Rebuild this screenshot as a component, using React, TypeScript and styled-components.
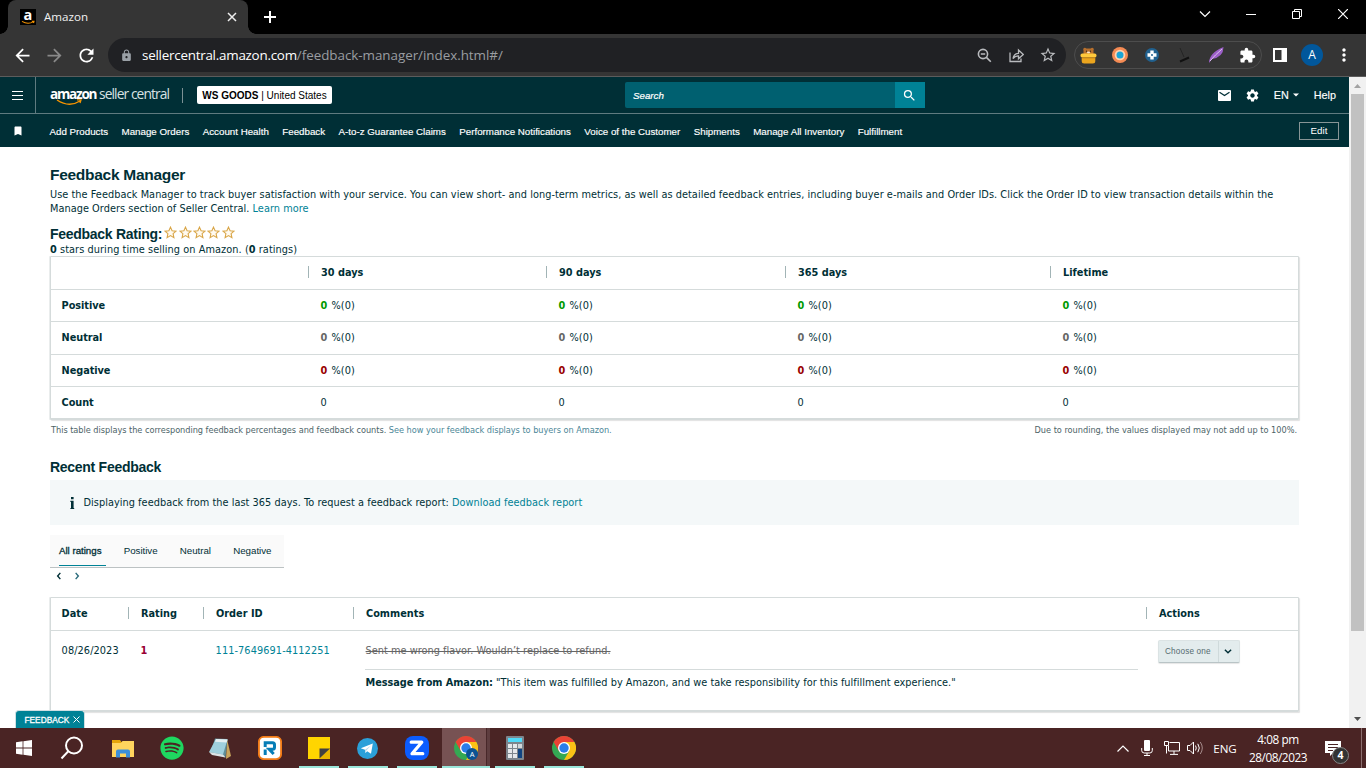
import React from "react";
import styled, { createGlobalStyle, css } from "styled-components";
import {
  MdArrowBack,
  MdArrowForward,
  MdRefresh,
  MdLock,
  MdStarOutline,
  MdExtension,
  MdMoreVert,
  MdSettings,
  MdBookmark,
  MdSearch,
} from "react-icons/md";
import { FaSpotify } from "react-icons/fa";

const ui = `"Open Sans", "Noto Sans", sans-serif`;
const arial = `"Liberation Sans", Arial, sans-serif`;
const verdana = `"DejaVu Sans", Verdana, sans-serif`;
const ink = "#002f36";
const teal = "#008296";
const line = "#d5dbdb";

const Global = createGlobalStyle`
  * { box-sizing: border-box; }
  body { margin: 0; background: #fff; overflow: hidden; }
  svg { display: block; flex: none; }
`;

const Desktop = styled.div`
  width: 1366px;
  height: 768px;
  display: flex;
  flex-direction: column;
  white-space: nowrap;
  overflow: hidden;
`;

/* ---------- browser chrome ---------- */

const TabStrip = styled.div`
  height: 34px;
  flex: none;
  background: #000;
  display: flex;
  align-items: center;
  padding-left: 8px;
  color: #fff;
`;

const BrowserTab = styled.div`
  position: relative;
  width: 240px;
  height: 34px;
  background: #353535;
  border-radius: 8px 8px 0 0;
  display: flex;
  align-items: center;
  padding: 0 10px 1px 12px;
  font: 11.6px ${ui};
  color: #f1f1f1;
  &::before,
  &::after {
    content: "";
    position: absolute;
    bottom: 0;
    width: 8px;
    height: 8px;
  }
  &::before {
    left: -8px;
    background: radial-gradient(circle at 0 0, transparent 7.5px, #353535 8px);
  }
  &::after {
    right: -8px;
    background: radial-gradient(circle at 100% 0, transparent 7.5px, #353535 8px);
  }
`;

const TabName = styled.span`
  flex: 1;
  margin-left: 8px;
`;

const NewTab = styled.div`
  margin-left: 15px;
  flex: 1;
`;

const WindowButtons = styled.div`
  display: flex;
  height: 28px;
  align-items: center;
  align-self: flex-start;
`;

const WindowButton = styled.div`
  width: 46px;
  display: flex;
  justify-content: center;
`;

const Toolbar = styled.div`
  height: 43px;
  flex: none;
  background: #353535;
  border-bottom: 1px solid #5c5c5c;
  display: flex;
  align-items: center;
  padding-left: 6px;
`;

const ToolButton = styled.div<{ $w?: number; $color?: string }>`
  flex: none;
  width: ${(p) => p.$w ?? 32}px;
  display: flex;
  justify-content: center;
  color: ${(p) => p.$color ?? "#fff"};
`;

const Omnibox = styled.div`
  width: 958px;
  height: 34px;
  margin-left: 6px;
  border-radius: 17px;
  background: #202124;
  display: flex;
  align-items: center;
  padding: 0 2px 0 12px;
  color: #9aa0a6;
`;

const Url = styled.div`
  flex: 1;
  margin-left: 9px;
  font: 13.4px ${ui};
  letter-spacing: -0.24px;
  color: #fff;
`;

const UrlPath = styled.span`
  color: #9a9da1;
  letter-spacing: -0.03px;
`;

const Extensions = styled.div`
  width: 188px;
  height: 28px;
  margin: 0 2px 0 8px;
  border: 1px solid #4d4d4d;
  border-radius: 14px;
  display: flex;
  align-items: center;
`;

const Avatar = styled.div`
  width: 22px;
  height: 22px;
  border-radius: 50%;
  background: #01579b;
  color: #fff;
  font: 12px/22px ${ui};
  text-align: center;
`;

/* ---------- page ---------- */

const Viewport = styled.div`
  position: relative;
  height: 651px;
  flex: none;
  display: flex;
`;

const Page = styled.div`
  width: 1349px;
  height: 651px;
  overflow: hidden;
`;

const Scrollbar = styled.div`
  width: 17px;
  background: #f1f1f1;
  display: flex;
  flex-direction: column;
  align-items: center;
  justify-content: space-between;
  padding: 7px 0 7px;
`;

const Thumb = styled.div`
  width: 13px;
  height: 537px;
  margin: 6px 0 auto;
  background: #c1c1c1;
`;

const HeaderBar = styled.header`
  height: 37px;
  background: ${ink};
  border-bottom: 1px solid #5f7b80;
  display: flex;
  align-items: center;
  color: #fff;
`;

const MenuButton = styled.div`
  width: 36px;
  height: 36px;
  border-right: 1px solid #5f7b80;
  display: flex;
  align-items: center;
  justify-content: center;
`;

const Brand = styled.div`
  position: relative;
  width: 133px;
  height: 18px;
  margin: 0 14px 0 14px;
  display: flex;
  align-items: center;
`;

const BrandName = styled.span`
  font: 700 13.6px/16px ${ui};
  letter-spacing: -1.25px;
  width: 49px;
  margin-top: -3px;
`;

const BrandSub = styled.span`
  font: 400 13.8px/16px ${ui};
  letter-spacing: -0.91px;
  color: #d9e2e3;
  flex: 1;
  margin-top: -3px;
`;

const BrandRule = styled.span`
  width: 1px;
  height: 15px;
  background: #7c9195;
`;

const Smile = styled.svg`
  position: absolute;
  left: 6px;
  top: 13px;
`;

const StorePill = styled.div`
  width: 135px;
  height: 18px;
  border-radius: 2px;
  background: #fff;
  color: #000;
  font: 10px/19px ${arial};
  text-align: center;
`;

const SearchBox = styled.div`
  margin-left: 293px;
  width: 270px;
  height: 26px;
  border-radius: 2px 0 0 2px;
  background: #006070;
  padding-left: 8px;
  font: italic 9.75px/27px ${arial};
  -webkit-text-stroke: 0.2px #fff;
`;

const SearchButton = styled.div`
  width: 30px;
  height: 26px;
  padding-right: 1px;
  background: #008296;
  display: flex;
  align-items: center;
  justify-content: center;
`;

const HeaderTools = styled.div`
  margin-left: auto;
  padding-right: 13px;
  display: flex;
  align-items: center;
  font: 10.8px ${arial};
  -webkit-text-stroke: 0.15px #fff;
`;

const Lang = styled.div`
  display: flex;
  align-items: center;
  gap: 4px;
  margin-right: 15px;
`;

const NavBar = styled.nav`
  height: 33px;
  background: ${ink};
  color: #fff;
  display: flex;
  align-items: center;
  gap: 13.45px;
  padding: 0 10px 0 12px;
  font: 9.75px ${arial};
`;

const BookmarkSlot = styled.div`
  width: 24.1px;
`;

const NavLink = styled.span`
  -webkit-text-stroke: 0.15px #fff;
  padding-top: 2px;
`;

const EditButton = styled.div`
  margin-left: auto;
  width: 40px;
  height: 18px;
  border: 1px solid #879596;
  text-align: center;
  line-height: 16px;
`;

const Main = styled.main`
  padding: 18px 50px 0 50px;
  color: ${ink};
  font: 9.75px/14px ${verdana};
  letter-spacing: 0.03px;
`;

const PageTitle = styled.h1`
  margin: 0;
  font: 700 15.5px/20px ${arial};
  letter-spacing: -0.28px;
`;

const Heading = styled.h2`
  margin: 0;
  font: 700 14px/20px ${arial};
  letter-spacing: -0.28px;
`;

const Intro = styled.p`
  margin: 3px 0 8px;
  letter-spacing: 0.042px;
`;

const Link = styled.a`
  color: ${teal};
`;

const RatingLine = styled.div`
  display: flex;
  align-items: center;
  height: 19px;
  padding-top: 1px;
`;

const Stars = styled.div`
  display: flex;
  gap: 1.4px;
  margin: -4px 0 0 2px;
`;

const RatingSummary = styled.div`
  height: 13px;
  line-height: 14px;
  letter-spacing: 0.07px;
`;

const Card = styled.section`
  border: 1px solid ${line};
  border-bottom-width: 2px;
  border-radius: 1px;
  box-shadow: 1px 1px 1px rgba(0, 0, 0, 0.12), -1px 0 0 rgba(213, 219, 219, 0.5);
`;

const summaryCols = css`
  grid-template-columns: 257px 238px 239px 265px 1fr;
`;
const feedbackCols = css`
  grid-template-columns: 77px 75px 150px 793px 1fr;
`;

const TableRow = styled.div<{ $h: number; $feedback?: boolean; $top?: boolean }>`
  display: grid;
  ${(p) => (p.$feedback ? feedbackCols : summaryCols)}
  height: ${(p) => p.$h}px;
  align-items: ${(p) => (p.$top ? "start" : "center")};
  & + & {
    border-top: 1px solid ${line};
  }
`;

const HeadCell = styled.div`
  font-weight: 700;
  letter-spacing: 0;
  padding-left: 10.6px;
  height: 12px;
  line-height: 13px;
  margin-top: -2px;
  & + & {
    padding-left: 12px;
    border-left: 1px solid #a2b4b6;
  }
`;

const Cell = styled.div`
  padding-left: 12.6px;
  letter-spacing: 0.07px;
`;

const RowName = styled.div`
  padding-left: 10.6px;
  font-weight: 700;
  letter-spacing: -0.06px;
`;

const Percent = styled.b<{ $tone: string }>`
  color: ${(p) => p.$tone};
  margin-right: 4px;
`;

const Note = styled.div`
  display: flex;
  justify-content: space-between;
  padding: 4px 2px 0 1px;
  height: 16px;
  font-size: 8.2px;
  line-height: 13px;
  letter-spacing: -0.03px;
  color: #4d6468;
  margin-bottom: 21px;
`;

const NoteLink = styled.a`
  color: #4c8798;
`;

const NoteRight = styled.span`
  letter-spacing: -0.01px;
`;

const Alert = styled.div`
  height: 45px;
  margin: 3px 0 10px;
  background: #f4f8f9;
  display: flex;
  align-items: center;
  padding-left: 20px;
`;

const AlertText = styled.span`
  margin-left: 8.5px;
  letter-spacing: 0.045px;
`;

const FilterTabs = styled.div`
  width: 234px;
  height: 33px;
  background: #fafafa;
  border-bottom: 1px solid #bcc2c3;
  display: flex;
  gap: 22.2px;
  padding-left: 9px;
  font: 9.75px/31px ${arial};
  letter-spacing: -0.03px;
`;

const FilterTab = styled.div<{ $active?: boolean }>`
  ${(p) =>
    p.$active &&
    css`
      width: 47px;
      height: 31px;
      margin-right: -4.5px;
      border-bottom: 1px solid ${teal};
      -webkit-text-stroke: 0.3px ${ink};
    `}
`;

const Pager = styled.div`
  height: 29px;
  padding: 4px 0 0 5px;
  display: flex;
  gap: 10px;
`;

const FeedbackCell = styled.div<{ $first?: boolean }>`
  padding: 13px 0 0 ${(p) => (p.$first ? 10.6 : 12.6)}px;
  letter-spacing: 0.09px;
`;

const Comment = styled.div`
  padding: 0 8px 0 12px;
`;

const CommentText = styled.div`
  height: 39px;
  padding: 13px 0 0 0.6px;
  border-bottom: 1px solid ${line};
  s {
    color: #666;
  }
`;

const AmazonMessage = styled.div`
  padding: 6px 0 0 0.6px;
  b {
    letter-spacing: -0.05px;
  }
`;

const Action = styled.div`
  width: 82px;
  height: 23px;
  margin: 9px 0 0 11.5px;
  border-radius: 2px;
  background: #e3eced;
  border: 1px solid #dbe3e4;
  border-bottom-color: #b9c4c6;
  box-shadow: 0 1px 1px rgba(0, 0, 0, 0.1);
  display: flex;
  font: 8.2px/22px ${arial};
  letter-spacing: 0.16px;
  color: #556b70;
`;

const ActionLabel = styled.span`
  width: 60px;
  padding-left: 6.5px;
  border-right: 1px solid #cfdadb;
`;

const ActionArrow = styled.span`
  flex: 1;
  display: flex;
  align-items: center;
  justify-content: center;
  padding: 0 1px 2px 0;
`;

const FeedbackTab = styled.div`
  position: absolute;
  left: 15px;
  bottom: 0;
  width: 70px;
  height: 18px;
  border: 1px solid #cfdfe2;
  border-bottom: 0;
  border-radius: 4px 4px 0 0;
  background: ${teal};
  color: #fff;
  display: flex;
  align-items: center;
  gap: 4px;
  padding-left: 8.5px;
  font: 8.3px ${arial};
  -webkit-text-stroke: 0.3px #fff;
`;

/* ---------- taskbar ---------- */

const Taskbar = styled.div`
  height: 40px;
  flex: none;
  background: #4a2424;
  display: flex;
  color: #fff;
`;

const TaskItem = styled.div<{ $open?: boolean; $active?: boolean; $nudge?: number }>`
  width: 49px;
  height: 40px;
  display: flex;
  align-items: center;
  justify-content: center;
  padding-right: ${(p) => p.$nudge ?? 0}px;
  ${(p) =>
    p.$open &&
    css`
      background: linear-gradient(#9ae6da, #9ae6da) 5px 38px / 40px 2px no-repeat;
    `}
  ${(p) =>
    p.$active &&
    css`
      background: linear-gradient(#9ae6da, #9ae6da) 1px 38px / 48px 2px no-repeat,
        linear-gradient(90deg, transparent 1px, #775253 1px, #775253 45px, #482729 45px, #482729 46px, #5e3d3f 46px);
    `}
`;

const Tray = styled.div`
  margin-left: auto;
  display: flex;
  align-items: center;
  font: 11.6px/17px ${ui};
`;

const TrayIcon = styled.div<{ $w: number }>`
  width: ${(p) => p.$w}px;
  display: flex;
  justify-content: center;
`;

const Clock = styled.div`
  width: 70px;
  text-align: center;
  font-size: 11.8px;
  letter-spacing: -0.46px;
  line-height: 18px;
`;

const Notices = styled.div`
  position: relative;
  width: 48px;
  padding-left: 12px;
`;

const NoticeCount = styled.div`
  position: absolute;
  left: 19px;
  top: 6px;
  width: 17px;
  height: 17px;
  border-radius: 50%;
  border: 1px solid #858585;
  background: #333;
  font: 700 10.5px/14px ${ui};
  text-align: center;
`;

const DesktopEdge = styled.div`
  width: 5px;
  height: 40px;
  border-left: 1px solid #8b6e6e;
`;

/* ---------- drawings ---------- */

const AmazonIcon = () => (
  <svg width="16" height="16" viewBox="0 0 16 16">
    <rect width="16" height="16" fill="#000" />
    <text x="8" y="11" textAnchor="middle" fontFamily="Open Sans" fontWeight="700" fontSize="14.5" fill="#fff">a</text>
    <path d="M2 12.4Q8 16 13.600 12.600M11.800 12.200h2.200l-.5 1.800" stroke="#f79400" strokeWidth="1.100" fill="none" />
  </svg>
);

const chevronPaths = {
  left: "M6 1L3 4.5L6 8",
  right: "M3 1L6 4.5L3 8",
  down: "M1 3L4.5 6.5L8 3",
};

const Chevron = ({ d, color = ink }: { d: keyof typeof chevronPaths; color?: string }) => (
  <svg width="8" height="8" viewBox="0 0 9 9">
    <path d={chevronPaths[d]} stroke={color} strokeWidth="1.6" fill="none" />
  </svg>
);

const RatingStar = () => (
  <svg width="13" height="13" viewBox="0 0 13 13">
    <path d="M6.5 1.1L8.1 4.7L12 5.1L9.1 7.7L9.9 11.6L6.5 9.6L3.1 11.6L3.9 7.7L1 5.1L4.9 4.7Z" fill="#fffaf0" stroke="#d9a648" strokeWidth="1.1" />
  </svg>
);

const Chrome = ({ badge }: { badge?: boolean }) => (
  <svg width="24" height="24" viewBox="0 0 24 24">
    <circle cx="12" cy="12" r="12" fill="#34a853" />
    <path d="M12 6H22.4A12 12 0 0 1 12 24L17.2 15Z" fill="#fbc116" />
    <path d="M1.6 6A12 12 0 0 1 22.4 6H12L6.8 15Z" fill="#ea4335" />
    <circle cx="12" cy="12" r="6" fill="#fff" />
    <circle cx="12" cy="12" r="4.7" fill="#2a7de9" />
    {badge && (
      <>
        <circle cx="18" cy="18" r="6" fill="#0b5394" />
        <text x="18" y="20.8" textAnchor="middle" fontFamily="Open Sans" fontSize="7.5" fill="#fff">A</text>
      </>
    )}
  </svg>
);

const WindowsLogo = () => (
  <svg width="16" height="16" viewBox="0 0 16 16" fill="#fff">
    <path d="M0 2.2L6.6 1.3V7.5H0ZM7.4 1.2L16 0V7.5H7.4ZM0 8.4H6.6V14.7L0 13.8ZM7.4 8.4H16V16L7.4 14.8Z" />
  </svg>
);

const Folder = () => (
  <svg width="22" height="19" viewBox="0 0 22 19">
    <path d="M0 1h8l1.5 2H22v15H0z" fill="#e5a50a" />
    <path d="M0 4h9l1.5-2H22v16H0z" fill="#ffd45e" />
    <path d="M4 18.5v-6a2 2 0 0 1 2-2h10a2 2 0 0 1 2 2v6h-4v-4H8v4z" fill="#3c8fd9" />
  </svg>
);

const Notepad = () => (
  <svg width="22" height="22" viewBox="0 0 22 22">
    <path d="M18 2l4 17-5 3z" fill="#c8a55c" />
    <path d="M6 1.5L18.5 2L16.5 20.5L1 16Z" fill="#5f8e98" />
    <path d="M7 2L18.5 2.5L14 17.5L0 15Z" fill="#9fd0dd" />
    <path d="M7 2L18.5 2.5L17.6 5.5L6 4.8Z" fill="#e5eff1" />
    <path d="M0 15L14 17.5L16.5 20.5L3 18Z" fill="#dce3e5" />
  </svg>
);

const RIcon = () => (
  <svg width="24" height="24" viewBox="0 0 24 24">
    <rect x=".9" y=".9" width="22.2" height="22.2" rx="5" fill="#fff" stroke="#f37b16" strokeWidth="1.9" />
    <path d="M7.2 11V6.700h7.300q2 0 2 2v2.600q0 2-2 2h-3.300l4.500 4.700M7.200 13.500V19" fill="none" stroke="#067db7" strokeWidth="3" />
  </svg>
);

const StickyNote = () => (
  <svg width="22" height="22" viewBox="0 0 22 22">
    <path d="M0 0H22V22H0Z" fill="#ffd500" />
    <path d="M11 22L22 11V22Z" fill="#e8b500" />
    <path d="M11.5 11.5H22L11.5 21.5Z" fill="#403f41" />
  </svg>
);

const Telegram = () => (
  <svg width="21" height="21" viewBox="0 0 21 21">
    <circle cx="10.5" cy="10.5" r="10.5" fill="#2ba0d9" />
    <path d="M3.8 10.2L15.8 5.5L14 15.8L10.2 13.2L8.4 15L8 11.7Z" fill="#fff" />
    <path d="M8 11.7L14 7.4L9.3 12.5L8.4 15Z" fill="#b5d9ed" />
  </svg>
);

const ZIcon = () => (
  <svg width="24" height="24" viewBox="0 0 24 24">
    <rect width="24" height="24" rx="8" fill="#0b5cff" />
    <path d="M6.2 6.2H16.8L7 17.7H17.8" fill="none" stroke="#fff" strokeWidth="3.2" strokeLinecap="round" strokeLinejoin="round" />
  </svg>
);

const Calculator = () => (
  <svg width="18" height="24" viewBox="0 0 18 24">
    <rect width="18" height="24" rx="1" fill="#7d858d" />
    <rect x="2" y="2" width="14" height="4" fill="#50d9f8" />
    {[8, 13, 18].map((y) => (
      <g key={y} fill="#e5e8eb">
        <rect x="2" y={y} width="4" height="4" />
        <rect x="7" y={y} width="4" height="4" />
      </g>
    ))}
    <rect x="12" y="8" width="4" height="4" fill="#d2d7db" />
    <rect x="12" y="13" width="4" height="9" fill="#104482" />
  </svg>
);

const Honey = () => (
  <svg width="17" height="17" viewBox="0 0 17 17">
    <path d="M3.5 7V3.5a1.8 1.8 0 0 1 .5-2.500q1.200-.7 2.300.5h4.400q1.100-1.200 2.300-.5a1.800 1.800 0 0 1 .5 2.500V7z" fill="#b8702d" />
    <circle cx="6.5" cy="4.2" r=".6" fill="#222" />
    <circle cx="10.5" cy="4.2" r=".6" fill="#222" />
    <ellipse cx="8.5" cy="5.500" rx="1.6" ry="1" fill="#f4e3cd" />
    <rect x=".5" y="6.500" width="16" height="4" rx="1.800" fill="#ffc93c" />
    <path d="M1.700 10.500h13.600v3.500q0 2.500-2.500 2.500h-8.600q-2.500 0-2.500-2.500z" fill="#eba51e" />
    <path d="M2 10.500h13v.8H2z" fill="#b87d16" />
  </svg>
);

/* ---------- content ---------- */

const navLinks = [
  "Add Products",
  "Manage Orders",
  "Account Health",
  "Feedback",
  "A-to-z Guarantee Claims",
  "Performance Notifications",
  "Voice of the Customer",
  "Shipments",
  "Manage All Inventory",
  "Fulfillment",
];

const periods = ["30 days", "90 days", "365 days", "Lifetime"];

const ratings = [
  { name: "Positive", tone: "#009900", h: 32 },
  { name: "Neutral", tone: "#666666", h: 33 },
  { name: "Negative", tone: "#990000", h: 32 },
];

export default function App() {
  return (
    <Desktop>
      <Global />
      <TabStrip>
        <BrowserTab>
          <AmazonIcon />
          <TabName>Amazon</TabName>
          <svg width="12" height="12" viewBox="0 0 12 12"><path d="M2 2l8 8M10 2l-8 8" stroke="#eee" strokeWidth="1.500" /></svg>
        </BrowserTab>
        <NewTab>
          <svg width="14" height="14" viewBox="0 0 14 14"><path d="M7 1v12M1 7h12" stroke="#fff" strokeWidth="2" /></svg>
        </NewTab>
        <WindowButtons>
          <WindowButton><svg width="12" height="8" viewBox="0 0 12 8"><path d="M1 1.500l5 5 5-5" stroke="#fff" strokeWidth="1.200" fill="none" /></svg></WindowButton>
          <WindowButton><svg width="10" height="1" viewBox="0 0 10 1"><path d="M0 .5h10" stroke="#fff" /></svg></WindowButton>
          <WindowButton><svg width="10" height="10" viewBox="0 0 10 10"><path d="M.5 2.500h7v7h-7zM2.500 2.500v-2h7v7h-2" stroke="#fff" fill="none" /></svg></WindowButton>
          <WindowButton><svg width="10" height="10" viewBox="0 0 10 10"><path d="M0 0l10 10M10 0l-10 10" stroke="#fff" strokeWidth="1.200" /></svg></WindowButton>
        </WindowButtons>
      </TabStrip>

      <Toolbar>
        <ToolButton><MdArrowBack size={21} /></ToolButton>
        <ToolButton $color="#898989"><MdArrowForward size={21} /></ToolButton>
        <ToolButton><MdRefresh size={21} /></ToolButton>
        <Omnibox>
          <MdLock size={13} />
          <Url>sellercentral.amazon.com<UrlPath>/feedback-manager/index.html#/</UrlPath></Url>
          <ToolButton $color="#b9bbbe">
            <svg width="15" height="15" viewBox="0 0 15 15" fill="none" stroke="currentColor" strokeWidth="1.600"><circle cx="6" cy="6" r="4.600" /><path d="M9.400 9.400l4.400 4.400M3.800 6h4.400" /></svg>
          </ToolButton>
          <ToolButton $color="#b9bbbe">
            <svg width="15" height="15" viewBox="0 0 15 15" fill="none" stroke="currentColor" strokeWidth="1.300"><path d="M1 4.500v9h11v-3M4 10.500c.5-3.500 2.500-5 5.500-5.200v-3.200l4.800 4.400-4.800 4.300v-3c-2.500 0-4 .7-5.500 2.700z" /></svg>
          </ToolButton>
          <ToolButton $color="#b9bbbe"><MdStarOutline size={18} /></ToolButton>
        </Omnibox>
        <Extensions>
          <ToolButton $w={27}><Honey /></ToolButton>
          <ToolButton $w={36}>
            <svg width="16" height="16" viewBox="0 0 16 16"><circle cx="8" cy="8" r="8" fill="#f58b54" /><circle cx="8" cy="8" r="5.300" fill="#ffd3b0" /><circle cx="8" cy="8" r="3.500" fill="#1ba5d6" /></svg>
          </ToolButton>
          <ToolButton $w={28}>
            <svg width="14" height="14" viewBox="0 0 14 14"><circle cx="7" cy="7" r="7" fill="#21618f" /><path d="M7 2.500v9M2.500 7h9" stroke="#fff" strokeWidth="3.400" /><circle cx="7" cy="7" r="1" fill="#21618f" /></svg>
          </ToolButton>
          <ToolButton $w={36}>
            <svg width="12" height="16" viewBox="0 0 12 16"><path d="M2 1l4 9" stroke="#242424" /><path d="M2 14.500l9-4" stroke="#111" strokeWidth="2" /></svg>
          </ToolButton>
          <ToolButton $w={28}>
            <svg width="15" height="16" viewBox="0 0 15 16"><path d="M0 16Q0 6 14.500 0Q14.500 10 3 12Z" fill="#9b5fc7" /><path d="M1 14Q6 8 13 2" stroke="#dcc0f0" fill="none" /></svg>
          </ToolButton>
          <ToolButton $w={35}><MdExtension size={17} /></ToolButton>
        </Extensions>
        <ToolButton>
          <svg width="14" height="14" viewBox="0 0 14 14"><path d="M1 1h12v12H1z" fill="none" stroke="#fff" strokeWidth="2" /><path d="M8.500 1H13v12H8.500z" fill="#fff" /></svg>
        </ToolButton>
        <ToolButton><Avatar>A</Avatar></ToolButton>
        <ToolButton><MdMoreVert size={20} /></ToolButton>
      </Toolbar>

      <Viewport>
        <Page>
          <HeaderBar>
            <MenuButton>
              <svg width="11" height="9" viewBox="0 0 11 9"><path d="M0 .5h11M0 4.500h11M0 8.500h11" stroke="#fff" strokeWidth="1.200" /></svg>
            </MenuButton>
            <Brand>
              <BrandName>amazon</BrandName>
              <BrandSub>seller central</BrandSub>
              <BrandRule />
              <Smile width="27" height="7" viewBox="0 0 27 7"><path d="M1 1Q13 9 24 2M21 .8h4l-1 3.200" stroke="#f79400" strokeWidth="1.300" fill="none" /></Smile>
            </Brand>
            <StorePill><b>WS GOODS</b> | United States</StorePill>
            <SearchBox>Search</SearchBox>
            <SearchButton><MdSearch size={15} /></SearchButton>
            <HeaderTools>
              <svg width="13" height="11" viewBox="0 0 13 11"><rect width="13" height="11" rx="1" fill="#fff" /><path d="M1.500 2.200L6.500 5.500L11.500 2.200" stroke={ink} fill="none" strokeWidth="1.200" /></svg>
              <ToolButton $w={43}><MdSettings size={15} /></ToolButton>
              <Lang>EN <svg width="6" height="4" viewBox="0 0 6 4"><path d="M0 .5h6l-3 3z" fill="#fff" /></svg></Lang>
              <span>Help</span>
            </HeaderTools>
          </HeaderBar>
          <NavBar>
            <BookmarkSlot><MdBookmark size={12} /></BookmarkSlot>
            {navLinks.map((t) => <NavLink key={t}>{t}</NavLink>)}
            <EditButton>Edit</EditButton>
          </NavBar>

          <Main>
            <PageTitle>Feedback Manager</PageTitle>
            <Intro>
              Use the Feedback Manager to track buyer satisfaction with your service. You can view short- and long-term metrics, as well as detailed feedback entries, including buyer e-mails and Order IDs. Click the Order ID to view transaction details within the
              <br />
              Manage Orders section of Seller Central. <Link>Learn more</Link>
            </Intro>
            <RatingLine>
              <Heading>Feedback Rating:</Heading>
              <Stars>{[1, 2, 3, 4, 5].map((n) => <RatingStar key={n} />)}</Stars>
            </RatingLine>
            <RatingSummary><b>0</b> stars during time selling on Amazon. (<b>0</b> ratings)</RatingSummary>
            <Card>
              <TableRow $h={32}>
                <HeadCell />
                {periods.map((p) => <HeadCell key={p}>{p}</HeadCell>)}
              </TableRow>
              {ratings.map((r) => (
                <TableRow key={r.name} $h={r.h}>
                  <RowName>{r.name}</RowName>
                  {periods.map((p) => <Cell key={p}><Percent $tone={r.tone}>0</Percent>%(0)</Cell>)}
                </TableRow>
              ))}
              <TableRow $h={32}>
                <RowName>Count</RowName>
                {periods.map((p) => <Cell key={p}>0</Cell>)}
              </TableRow>
            </Card>
            <Note>
              <span>This table displays the corresponding feedback percentages and feedback counts. <NoteLink>See how your feedback displays to buyers on Amazon.</NoteLink></span>
              <NoteRight>Due to rounding, the values displayed may not add up to 100%.</NoteRight>
            </Note>
            <Heading>Recent Feedback</Heading>
            <Alert>
              <svg width="5" height="12" viewBox="0 0 5 12"><path d="M1 0h2.600v2.300H1zM.4 3.800h3.200V11h.6v1H.4v-1H1V5H.4z" fill={ink} /></svg>
              <AlertText>Displaying feedback from the last 365 days. To request a feedback report: <Link>Download feedback report</Link></AlertText>
            </Alert>
            <FilterTabs>
              <FilterTab $active>All ratings</FilterTab>
              <FilterTab>Positive</FilterTab>
              <FilterTab>Neutral</FilterTab>
              <FilterTab>Negative</FilterTab>
            </FilterTabs>
            <Pager><Chevron d="left" /><Chevron d="right" color="#2b6c7c" /></Pager>
            <Card>
              <TableRow $h={32} $feedback>
                {["Date", "Rating", "Order ID", "Comments", "Actions"].map((h) => <HeadCell key={h}>{h}</HeadCell>)}
              </TableRow>
              <TableRow $h={80} $feedback $top>
                <FeedbackCell $first>08/26/2023</FeedbackCell>
                <FeedbackCell><Percent $tone="#990033">1</Percent></FeedbackCell>
                <FeedbackCell><Link>111-7649691-4112251</Link></FeedbackCell>
                <Comment>
                  <CommentText><s>Sent me wrong flavor. Wouldn’t replace to refund.</s></CommentText>
                  <AmazonMessage><b>Message from Amazon:</b> "This item was fulfilled by Amazon, and we take responsibility for this fulfillment experience."</AmazonMessage>
                </Comment>
                <Action><ActionLabel>Choose one</ActionLabel><ActionArrow><Chevron d="down" /></ActionArrow></Action>
              </TableRow>
            </Card>
          </Main>
        </Page>
        <Scrollbar>
          <svg width="7" height="4" viewBox="0 0 7 4"><path d="M0 4L3.500 0L7 4z" fill="#a3a3a3" /></svg>
          <Thumb />
          <svg width="7" height="4" viewBox="0 0 7 4"><path d="M0 0L3.500 4L7 0z" fill="#505050" /></svg>
        </Scrollbar>
        <FeedbackTab>
          FEEDBACK
          <svg width="7" height="7" viewBox="0 0 7 7"><path d="M.5.5l6 6M6.500.5l-6 6" stroke="#fff" /></svg>
        </FeedbackTab>
      </Viewport>

      <Taskbar>
        <TaskItem $nudge={1}><WindowsLogo /></TaskItem>
        <TaskItem $nudge={3}>
          <svg width="24" height="24" viewBox="0 0 24 24" fill="none" stroke="#fff" strokeWidth="2"><circle cx="14" cy="9.500" r="8" /><path d="M8.300 15.300L1.500 22.500" /></svg>
        </TaskItem>
        <TaskItem><Folder /></TaskItem>
        <TaskItem><FaSpotify size={24} color="#1ed760" /></TaskItem>
        <TaskItem $nudge={1}><Notepad /></TaskItem>
        <TaskItem><RIcon /></TaskItem>
        <TaskItem $open><StickyNote /></TaskItem>
        <TaskItem $open><Telegram /></TaskItem>
        <TaskItem $open><ZIcon /></TaskItem>
        <TaskItem $active><Chrome badge /></TaskItem>
        <TaskItem $open><Calculator /></TaskItem>
        <TaskItem $open><Chrome /></TaskItem>
        <Tray>
          <TrayIcon $w={22}><svg width="12" height="7" viewBox="0 0 12 7"><path d="M.5 6.500L6 1l5.500 5.500" stroke="#fff" strokeWidth="1.200" fill="none" /></svg></TrayIcon>
          <TrayIcon $w={26}>
            <svg width="12" height="16" viewBox="0 0 12 16"><rect x="3" y="0" width="6" height="11" rx="1" fill="#fff" /><path d="M.7 8v2.500q0 2.500 2.500 2.500h5.600q2.500 0 2.500-2.500V8M6 13v2.500M3 15.500h6" stroke="#fff" fill="none" /></svg>
          </TrayIcon>
          <TrayIcon $w={23}>
            <svg width="16" height="14" viewBox="0 0 16 14"><path d="M5.500 1.500h10v8.500h-11v-5M10 10v3M6 13.400h8M.5.500h4v4h-4zM2.500 4.500v8" stroke="#fff" fill="none" /></svg>
          </TrayIcon>
          <TrayIcon $w={24}>
            <svg width="17" height="14" viewBox="0 0 17 14"><path d="M.5 4.500h2.500l3.500-3.500v12l-3.500-3.500H.5zM8.500 4.500q1.500 2.500 0 5M10.800 2.800q3 4.200 0 8.400" stroke="#fff" fill="none" /><path d="M13.300 1q4 6 0 12" stroke="#a58b8b" fill="none" /></svg>
          </TrayIcon>
          <TrayIcon $w={36}>ENG</TrayIcon>
          <Clock>4:08 pm<br />28/08/2023</Clock>
          <Notices>
            <svg width="16" height="15" viewBox="0 0 16 15"><path d="M0 0h16v12H8l-3 3v-3H0z" fill="#fff" /><path d="M3 3.500h10M3 6.500h10M3 9.500h5" stroke="#4a2424" /></svg>
            <NoticeCount>4</NoticeCount>
          </Notices>
          <DesktopEdge />
        </Tray>
      </Taskbar>
    </Desktop>
  );
}
